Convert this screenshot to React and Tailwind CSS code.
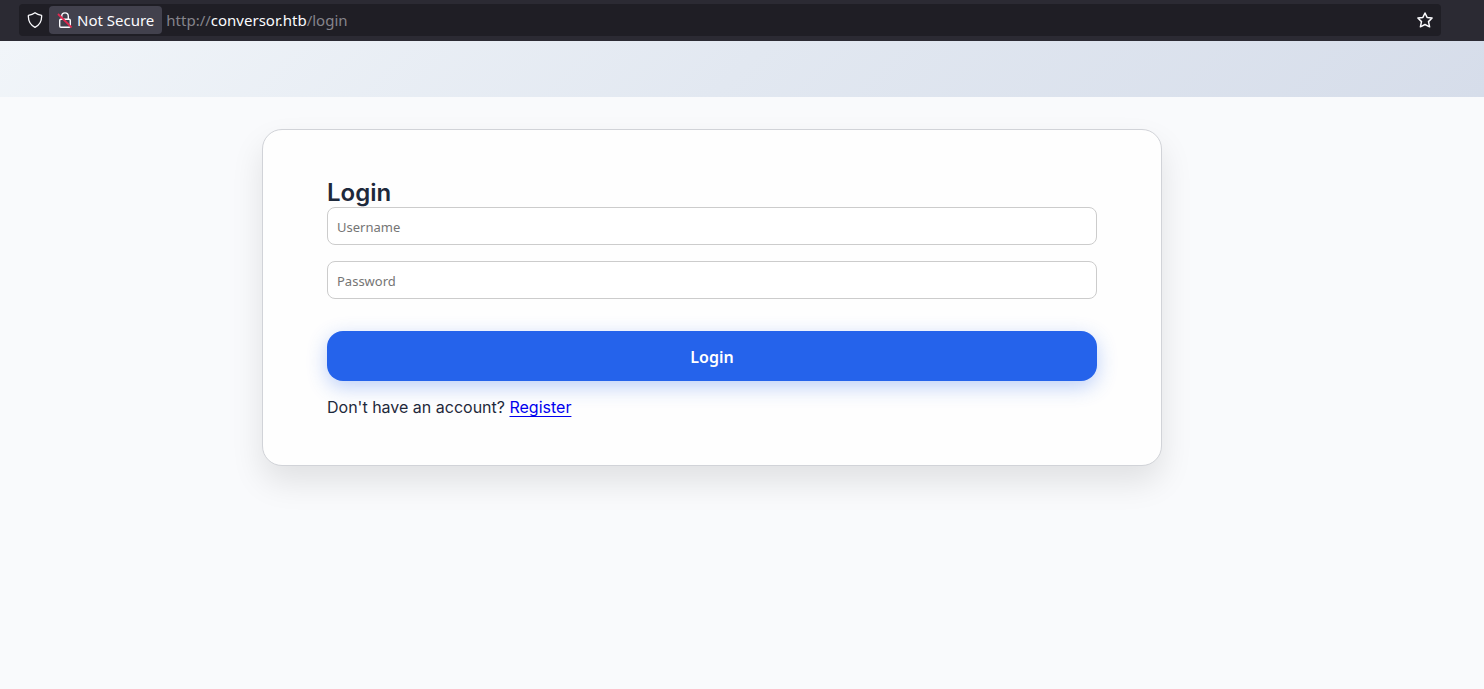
import React, { useState } from "react";

const ShieldIcon = () => (
  <svg
    className="h-4 w-4"
    viewBox="0 0 16 16"
    fill="none"
    stroke="#fbfbfe"
    strokeWidth="1.3"
    strokeLinejoin="round"
  >
    <path d="M8 .7C9.8 2.2 12 3 14.6 3.3 15 8.8 12.6 13 8 15.4 3.4 13 1 8.8 1.4 3.3 4 3 6.2 2.2 8 .7Z" />
  </svg>
);

const InsecureLockIcon = () => (
  <svg className="h-4 w-4" viewBox="0 0 16 16" fill="none" strokeWidth="1.4">
    <g stroke="#fbfbfe">
      <rect x="2.7" y="7.2" width="10.6" height="8" rx="1.2" />
      <path d="M4.7 7V4.2a3.3 3.3 0 0 1 6.6 0V7" />
    </g>
    <path d="M1 2 14.6 15.4" stroke="#e22850" strokeWidth="1.8" />
  </svg>
);

const StarIcon = () => (
  <svg
    className="h-4 w-4"
    viewBox="0 0 16 16"
    fill="none"
    stroke="#fbfbfe"
    strokeWidth="1.5"
    strokeLinejoin="round"
  >
    <path d="M8 1 10.1 5.4 15.1 6 11.5 9.6 12.6 14.8 8 12.5 3.4 14.8 4.5 9.6.9 6 5.9 5.4Z" />
  </svg>
);

const AddressBar = () => (
  <div className="flex h-[41px] items-start bg-[#2b2a33] pt-1 pr-[43px] pl-[19px] font-['Noto_Sans',sans-serif] text-[15px]">
    <div className="flex h-8 flex-1 items-center rounded bg-[#1f1e25] px-2">
      <button type="button" aria-label="Tracking protection">
        <ShieldIcon />
      </button>
      <button
        type="button"
        className="ml-1.5 flex h-7 items-center gap-1 rounded-sm bg-[#42414d] px-2 text-[#fbfbfe]"
      >
        <InsecureLockIcon />
        Not Secure
      </button>
      <div className="ml-1 flex-1 text-[#85848b]">
        http://<span className="text-[#fbfbfe]">conversor.htb</span>/login
      </div>
      <button type="button" aria-label="Bookmark this page">
        <StarIcon />
      </button>
    </div>
  </div>
);

const App = () => {
  const [username, setUsername] = useState("");
  const [password, setPassword] = useState("");

  const inputClass =
    "block h-[38px] w-full rounded-lg border border-[#cccccc] bg-white px-[9px] pt-0.5 font-['Noto_Sans',sans-serif] text-[13px] placeholder:text-[#757575]";

  return (
    <div className="min-h-screen bg-[#f9fafc] font-['Inter',sans-serif] text-[#1e293b]">
      <AddressBar />

      {/* Site header */}
      <header className="h-14 bg-linear-135 from-[#f1f5f9] via-[#e2e8f1] to-[#d6ddea]" />

      <main className="py-8 pr-[60px]">
        <div className="mx-auto max-w-[900px] rounded-[20px] border border-[#d1d3d8] bg-[#fefefe] px-16 py-12 shadow-[0_16px_32px_rgba(0,0,0,0.1)]">
          <h2 className="text-2xl leading-[29px] font-semibold">Login</h2>

          <form onSubmit={(e) => e.preventDefault()}>
            <input
              type="text"
              aria-label="Username"
              placeholder="Username"
              value={username}
              onChange={(e) => setUsername(e.target.value)}
              className={inputClass}
            />
            <input
              type="password"
              aria-label="Password"
              placeholder="Password"
              value={password}
              onChange={(e) => setPassword(e.target.value)}
              className={`mt-4 ${inputClass}`}
            />
            <button
              type="submit"
              className="mt-8 block h-[50px] w-full rounded-2xl bg-[#2563eb] pt-0.5 font-['Noto_Sans',sans-serif] text-base font-semibold text-white shadow-[0_6px_20px_rgba(37,99,235,0.3)]"
            >
              Login
            </button>
          </form>

          <p className="mt-4 text-base leading-5">
            Don't have an account?{" "}
            <a
              href="/register"
              className="text-[#0000ee] underline decoration-1 underline-offset-3"
            >
              Register
            </a>
          </p>
        </div>
      </main>
    </div>
  );
};

export default App;
